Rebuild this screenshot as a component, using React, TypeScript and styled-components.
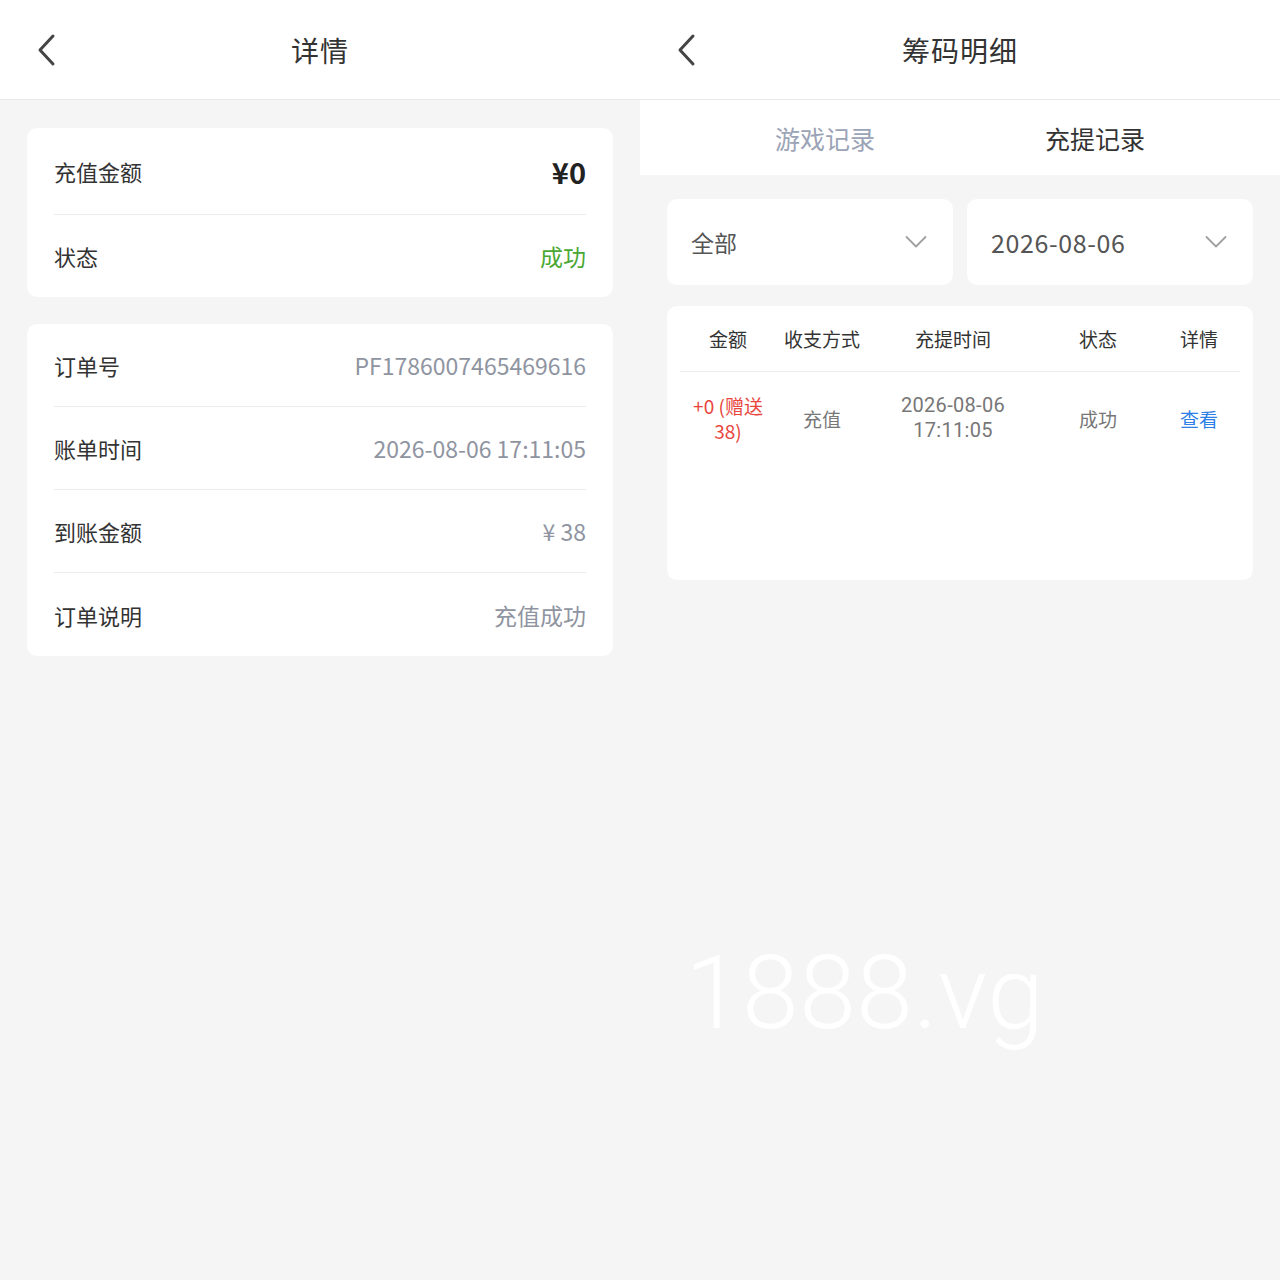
import styled, { createGlobalStyle } from 'styled-components';

const GlobalStyle = createGlobalStyle`
  * { box-sizing: border-box; }
  html, body {
    margin: 0;
    padding: 0;
    background: #f5f5f5;
    font-family: "Noto Sans CJK SC", "Noto Sans", sans-serif;
  }
`;

const Page = styled.div`
  display: flex;
  width: 1280px;
  min-height: 1280px;
  background: #f5f5f5;
`;

const Panel = styled.div`
  position: relative;
  width: 640px;
  min-height: 1280px;
  background: #f5f5f5;
  overflow: hidden;
`;

const Header = styled.div`
  position: relative;
  display: flex;
  align-items: center;
  justify-content: center;
  height: 100px;
  background: #ffffff;
  border-bottom: 1px solid #e9e9e9;
`;

const BackButton = styled.div`
  position: absolute;
  left: 34px;
  top: 33px;
  width: 26px;
  height: 34px;
  display: flex;
  align-items: center;
  justify-content: center;
`;

const Title = styled.h1`
  margin: 0;
  font-size: 28px;
  font-weight: 400;
  color: #333333;
  letter-spacing: 1px;
`;

const Content = styled.div`
  padding: 28px 27px;
  display: flex;
  flex-direction: column;
  gap: 27px;
`;

const Card = styled.div`
  background: #ffffff;
  border-radius: 10px;
  padding: 0 27px;
`;

const Row = styled.div<{ $h?: number }>`
  display: flex;
  align-items: center;
  justify-content: space-between;
  height: ${(p) => p.$h ?? 83}px;
  border-bottom: 1px solid #ececec;
  &:last-child {
    border-bottom: none;
  }
`;

const Label = styled.span`
  font-size: 22px;
  color: #333333;
`;

const Value = styled.span<{ $color?: string; $big?: boolean }>`
  font-size: ${(p) => (p.$big ? '29px' : '23px')};
  font-weight: ${(p) => (p.$big ? 700 : 400)};
  color: ${(p) => p.$color ?? '#8f94a1'};
`;

const Tabs = styled.div`
  display: grid;
  grid-template-columns: 1fr 1fr;
  height: 75px;
  padding: 0 50px;
  background: #ffffff;
`;

const Tab = styled.div<{ $active?: boolean }>`
  display: flex;
  align-items: center;
  justify-content: center;
  font-size: 25px;
  color: ${(p) => (p.$active ? '#333333' : '#9ba3b6')};
`;

const RightContent = styled.div`
  padding: 24px 27px;
  display: flex;
  flex-direction: column;
  gap: 21px;
`;

const Filters = styled.div`
  display: grid;
  grid-template-columns: 1fr 1fr;
  gap: 14px;
`;

const Select = styled.div`
  display: flex;
  align-items: center;
  justify-content: space-between;
  height: 86px;
  padding: 0 26px 0 24px;
  background: #ffffff;
  border-radius: 10px;
  font-size: 23px;
  color: #555555;
`;

const SelectText = styled.span<{ $num?: boolean }>`
  font-size: ${(p) => (p.$num ? '25px' : '23px')};
  letter-spacing: ${(p) => (p.$num ? '0.6px' : '0')};
`;

const TableCard = styled.div`
  height: 274px;
  background: #ffffff;
  border-radius: 10px;
  padding: 0 13px;
`;

const TableRow = styled.div<{ $head?: boolean }>`
  display: grid;
  grid-template-columns: 96px 92px 170px 120px 1fr;
  align-items: center;
  height: ${(p) => (p.$head ? '66px' : '92px')};
  border-bottom: ${(p) => (p.$head ? '1px solid #ececec' : 'none')};
  font-size: 19px;
  color: ${(p) => (p.$head ? '#333333' : '#777777')};
`;

const Cell = styled.div<{ $color?: string; $num?: boolean }>`
  text-align: center;
  font-family: ${(p) => (p.$num ? 'Roboto, "Noto Sans", sans-serif' : 'inherit')};
  font-size: ${(p) => (p.$num ? '20px' : '19px')};
  letter-spacing: ${(p) => (p.$num ? '0.3px' : '0')};
  line-height: 25px;
  color: ${(p) => p.$color ?? 'inherit'};
`;

const Watermark = styled.div`
  position: absolute;
  left: 45px;
  top: 933px;
  font-family: Roboto, "Noto Sans", sans-serif;
  font-weight: 300;
  font-size: 102px;
  color: #ffffff;
  letter-spacing: 0.5px;
  pointer-events: none;
`;

const BackIcon = () => (
  <svg width="22" height="34" viewBox="0 0 22 34">
    <path d="M17 3 L4 17 L17 31" fill="none" stroke="#444" strokeWidth="3" strokeLinecap="round" strokeLinejoin="round" />
  </svg>
);

const Chevron = () => (
  <svg width="22" height="14" viewBox="0 0 22 14">
    <path d="M1.5 2 L11 11.5 L20.5 2" fill="none" stroke="#a0a0a0" strokeWidth="1.8" strokeLinecap="round" strokeLinejoin="round" />
  </svg>
);

const details = [
  { label: '订单号', value: 'PF1786007465469616' },
  { label: '账单时间', value: '2026-08-06 17:11:05' },
  { label: '到账金额', value: '¥ 38' },
  { label: '订单说明', value: '充值成功' },
];

export default function App() {
  return (
    <Page>
      <GlobalStyle />
      <Panel>
        <Header>
          <BackButton><BackIcon /></BackButton>
          <Title>详情</Title>
        </Header>
        <Content>
          <Card>
            <Row $h={87}>
              <Label>充值金额</Label>
              <Value $big $color="#222222">¥0</Value>
            </Row>
            <Row $h={82}>
              <Label>状态</Label>
              <Value $color="#4aa832">成功</Value>
            </Row>
          </Card>
          <Card>
            {details.map((d) => (
              <Row key={d.label}>
                <Label>{d.label}</Label>
                <Value>{d.value}</Value>
              </Row>
            ))}
          </Card>
        </Content>
      </Panel>
      <Panel>
        <Header>
          <BackButton><BackIcon /></BackButton>
          <Title>筹码明细</Title>
        </Header>
        <Tabs>
          <Tab>游戏记录</Tab>
          <Tab $active>充提记录</Tab>
        </Tabs>
        <RightContent>
          <Filters>
            <Select>
              <SelectText>全部</SelectText>
              <Chevron />
            </Select>
            <Select>
              <SelectText $num>2026-08-06</SelectText>
              <Chevron />
            </Select>
          </Filters>
          <TableCard>
            <TableRow $head>
              <Cell>金额</Cell>
              <Cell>收支方式</Cell>
              <Cell>充提时间</Cell>
              <Cell>状态</Cell>
              <Cell>详情</Cell>
            </TableRow>
            <TableRow>
              <Cell $color="#e8453c">+0 (赠送<br />38)</Cell>
              <Cell>充值</Cell>
              <Cell $num>2026-08-06<br />17:11:05</Cell>
              <Cell>成功</Cell>
              <Cell $color="#2f80e6">查看</Cell>
            </TableRow>
          </TableCard>
        </RightContent>
        <Watermark>1888.vg</Watermark>
      </Panel>
    </Page>
  );
}
